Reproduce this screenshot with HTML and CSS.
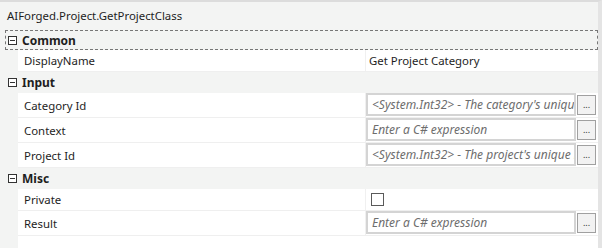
FILE: index.html
```html
<!DOCTYPE html>
<html>
<head>
<meta charset="utf-8">
<link rel="stylesheet" href="styles.css">
</head>
<body>
<div class="pg">
  <div class="title">AIForged.Project.GetProjectClass</div>
  <div class="cat focus"><span class="tog"></span><span class="cname">Common</span></div>
  <div class="row mid"><div class="lbl">DisplayName</div><div class="val"><span class="plain">Get Project Category</span></div></div>
  <div class="cat big"><span class="tog"></span><span class="cname">Input</span></div>
  <div class="row tall"><div class="lbl">Category Id</div><div class="val"><div class="box"><span class="ph">&lt;System.Int32&gt; - The category's unique identifier</span></div><div class="btn">...</div></div></div>
  <div class="row tall"><div class="lbl">Context</div><div class="val"><div class="box"><span class="ph">Enter a C# expression</span></div><div class="btn">...</div></div></div>
  <div class="row tall"><div class="lbl">Project Id</div><div class="val"><div class="box"><span class="ph">&lt;System.Int32&gt; - The project's unique identifier</span></div><div class="btn">...</div></div></div>
  <div class="cat big"><span class="tog"></span><span class="cname">Misc</span></div>
  <div class="row mid"><div class="lbl">Private</div><div class="val"><span class="chk"></span></div></div>
  <div class="row tall"><div class="lbl">Result</div><div class="val"><div class="box"><span class="ph">Enter a C# expression</span></div><div class="btn">...</div></div></div>
</div>
</body>
</html>
```
FILE: styles.css
```css
html, body {
  margin: 0;
  padding: 0;
  background: #ffffff;
}
body {
  font-family: "Noto Sans", "Open Sans", sans-serif;
  font-size: 11.4px;
  color: #1e1e1e;
}
.pg {
  width: 598px;
  height: 246px;
  border-top: 2px solid #dcdcdc;
  border-right: 4px solid #e4e4e4;
  background: linear-gradient(to right, #f3f4f3 0, #f3f4f3 18px, #ffffff 18px);
}
.title {
  height: 28px;
  line-height: 28px;
  padding-left: 7px;
  background: #f3f4f3;
}
.cat {
  height: 20px;
  display: flex;
  align-items: center;
  background: #f3f4f3;
  box-sizing: border-box;
}
.cat.big { height: 21px; }
.cat.focus {
  outline: 1px dashed #777;
  outline-offset: -1px;
  margin-left: 5px;
}
.tog {
  width: 9px;
  height: 9px;
  box-sizing: border-box;
  border: 1px solid #333;
  margin-left: 8px;
  margin-right: 5px;
  position: relative;
  background: #fff;
}
.cat.focus .tog { margin-left: 3px; }
.tog::after {
  content: "";
  position: absolute;
  left: 1px;
  right: 1px;
  top: 3px;
  height: 1px;
  background: #333;
}
.cname {
  font-weight: bold;
  font-size: 12px;
}
.row {
  display: flex;
  height: 21px;
  margin-left: 18px;
  background: #fff;
  border-bottom: 1px solid #efefef;
  box-sizing: border-box;
}
.row.tall { height: 25px; }
.row.mid { height: 22px; }
.lbl {
  width: 348px;
  padding-left: 6px;
  box-sizing: border-box;
  display: flex;
  align-items: center;
  border-right: 1px solid #f0f0f0;
}
.val {
  flex: 1;
  display: flex;
  align-items: center;
}
.plain { padding-left: 3px; }
.box {
  width: 210px;
  height: 23px;
  box-sizing: border-box;
  border: 2px solid #d4d4d4;
  padding-left: 4px;
  font-style: italic;
  font-size: 12px;
  color: #6d6d6d;
  white-space: nowrap;
  overflow: hidden;
  line-height: 19px;
  align-self: flex-start;
}
.ph {
  display: block;
  overflow: hidden;
  width: 202px;
}
.btn {
  width: 19px;
  height: 20px;
  box-sizing: border-box;
  border: 1px solid #a0a0a0;
  background: #f2f2f2;
  margin-left: 1px;
  margin-top: 2px;
  font-size: 9px;
  line-height: 18px;
  text-align: center;
  color: #333;
  align-self: flex-start;
  overflow: hidden;
}
.chk {
  width: 13px;
  height: 13px;
  box-sizing: border-box;
  border: 1px solid #5a5a5a;
  margin-left: 5px;
  background: #fff;
}
```
